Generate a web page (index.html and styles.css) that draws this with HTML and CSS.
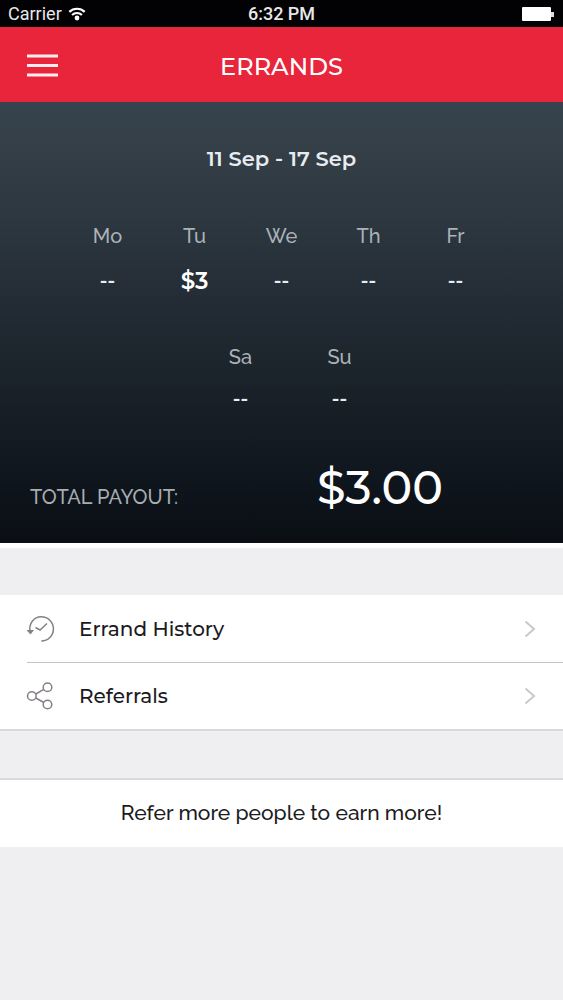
FILE: index.html
```html
<!DOCTYPE html>
<html lang="en">
<head>
<meta charset="utf-8">
<meta name="viewport" content="width=device-width, initial-scale=1">
<title>Errands</title>
<link rel="stylesheet" href="styles.css">
</head>
<body>
<div class="status">
  <div class="carrier">
    <span>Carrier</span>
    <svg class="wifi" viewBox="0 0 18 14" aria-hidden="true">
      <path d="M1.300 4.900a11 11 0 0 1 15.400 0M4.100 8a7 7 0 0 1 9.800 0" fill="none" stroke="#fff" stroke-width="2.200"/>
      <circle cx="9" cy="11" r="2.400" fill="#fff"/>
    </svg>
  </div>
  <span class="clock">6:32 PM</span>
  <svg class="battery" viewBox="0 0 33 14" aria-hidden="true">
    <rect width="29" height="14" rx="1" fill="#fff"/>
    <rect x="29" y="5" width="3" height="5" fill="#ddd"/>
  </svg>
</div>
<header class="bar">
  <button class="menu" type="button" aria-label="Menu">
    <svg viewBox="0 0 31 24" aria-hidden="true"><path d="M0 3h31M0 12.500h31M0 22h31" stroke="#fff" stroke-width="3" opacity=".92"/></svg>
  </button>
  <h1 class="title">ERRANDS</h1>
</header>
<main>
  <section class="summary">
    <h2 class="range">11 Sep - 17 Sep</h2>
    <dl class="days weekdays">
      <div class="day"><dt>Mo</dt><dd>--</dd></div>
      <div class="day"><dt>Tu</dt><dd class="paid">$3</dd></div>
      <div class="day"><dt>We</dt><dd>--</dd></div>
      <div class="day"><dt>Th</dt><dd>--</dd></div>
      <div class="day"><dt>Fr</dt><dd>--</dd></div>
    </dl>
    <dl class="days weekend">
      <div class="day"><dt>Sa</dt><dd>--</dd></div>
      <div class="day"><dt>Su</dt><dd>--</dd></div>
    </dl>
    <div class="payout">
      <span class="payout-label">TOTAL PAYOUT:</span>
      <strong class="payout-sum">$3.00</strong>
    </div>
  </section>
  <nav class="links">
    <a class="row" href="#history">
      <svg class="icon" viewBox="0 0 28 28" aria-hidden="true">
        <path d="M3.200 17.500C1.200 8.500 7 1.800 14.300 1.800a12.100 12.100 0 0 1 0 24.200"/>
        <path d="M8.500 12.500l4.500 2.500 7-6.500"/>
        <path class="tip" d="M-.5 15h7.500l-3.500 4.500z"/>
      </svg>
      <span class="name">Errand History</span>
      <svg class="chevron" viewBox="0 0 12 18" aria-hidden="true"><path d="M1.500 1.500L10 9l-8.500 7.500"/></svg>
    </a>
    <a class="row" href="#referrals">
      <svg class="icon" viewBox="0 0 28 28" aria-hidden="true">
        <circle cx="4.800" cy="14" r="4.300"/>
        <circle cx="20.500" cy="5.300" r="4.300"/>
        <circle cx="20.500" cy="22.500" r="4.300"/>
        <path d="M8.800 12l8-4.600M8.800 16l8 4.500"/>
      </svg>
      <span class="name">Referrals</span>
      <svg class="chevron" viewBox="0 0 12 18" aria-hidden="true"><path d="M1.500 1.500L10 9l-8.500 7.500"/></svg>
    </a>
  </nav>
  <p class="note">Refer more people to earn more!</p>
</main>
</body>
</html>
```
FILE: styles.css
```css
* {
  box-sizing: border-box;
}

body {
  margin: 0;
  min-height: 100vh;
  background: #efeef0;
  color: #1b1b1d;
  font-family: Montserrat, Inter, "Open Sans", sans-serif;
  font-size: 20px;
  line-height: 24px;
}

h1, h2, p, dl, dd {
  margin: 0;
}

.status {
  display: grid;
  grid-template-columns: 1fr auto 1fr;
  align-items: center;
  height: 27px;
  padding: 0 8px;
  background: #020103;
  color: #e8e8e8;
  font-family: Roboto, sans-serif;
  font-size: 18px;
}

.carrier {
  display: flex;
  align-items: center;
  gap: 6px;
}

.wifi {
  width: 18px;
  height: 14px;
}

.clock {
  font-weight: 500;
}

.battery {
  justify-self: end;
  width: 33px;
  height: 14px;
}

.bar {
  display: grid;
  grid-template-columns: 1fr auto 1fr;
  align-items: center;
  height: 75px;
  padding: 0 27px;
  background: #e8253a;
  color: #fff;
}

.menu {
  justify-self: start;
  padding: 0;
  border: 0;
  background: none;
}

.menu svg {
  display: block;
  width: 31px;
  height: 24px;
}

.title {
  padding-top: 4px;
  font-size: 24px;
  font-weight: 500;
}

.summary {
  padding-top: 45px;
  border-bottom: 5px solid #fff;
  background: linear-gradient(#38444d, #2b353e 30%, #1c242c 60%, #0d131a 90%, #0b0f14);
  color: #e6ecf0;
}

.range {
  font-size: 21px;
  font-weight: 600;
  text-align: center;
}

.days {
  display: grid;
  font-weight: 500;
  text-align: center;
}

.weekdays {
  grid-template-columns: repeat(5, 1fr);
  padding: 53px 64px 0;
}

.weekend {
  grid-template-columns: 99px 99px;
  justify-content: center;
  padding: 52px 0 0 17px;
}

.day {
  display: flex;
  flex-direction: column;
  gap: 21px;
}

.weekend .day {
  gap: 18px;
}

.day dt {
  color: #abb2b7;
  font-family: Raleway, "Open Sans", sans-serif;
}

.day dd {
  font-weight: 600;
}

.day .paid {
  color: #fff;
  font-size: 23px;
}

.payout {
  display: grid;
  grid-template-columns: 287px auto;
  align-items: baseline;
  padding: 49px 30px 27px;
}

.payout-label {
  color: #a8adb0;
  font-family: Raleway, Lato, sans-serif;
  font-weight: 500;
}

.payout-sum {
  color: #fff;
  font-size: 46px;
  font-weight: 500;
  line-height: 56px;
}

.links {
  margin-top: 47px;
  border-bottom: 2px solid #d9d8da;
  background: #fff;
}

.row {
  display: flex;
  align-items: center;
  height: 67px;
  padding-right: 27px;
  margin-left: 27px;
  color: inherit;
  font-weight: 500;
  text-decoration: none;
}

.row + .row {
  border-top: 1px solid #c4c3c5;
}

.icon {
  width: 28px;
  height: 28px;
  margin-right: 24px;
  overflow: visible;
  fill: none;
  stroke: #858086;
  stroke-width: 1.5;
}

.icon .tip {
  fill: #858086;
  stroke: none;
}

.name {
  flex: 1;
}

.chevron {
  width: 12px;
  height: 18px;
  fill: none;
  stroke: #c9c8cb;
  stroke-width: 2;
}

.note {
  margin-top: 47px;
  padding: 21px 0 22px;
  border-top: 2px solid #d9d8dc;
  background: #fff;
  font-family: Raleway, "Open Sans", sans-serif;
  font-size: 21px;
  font-weight: 500;
  text-align: center;
}
```
